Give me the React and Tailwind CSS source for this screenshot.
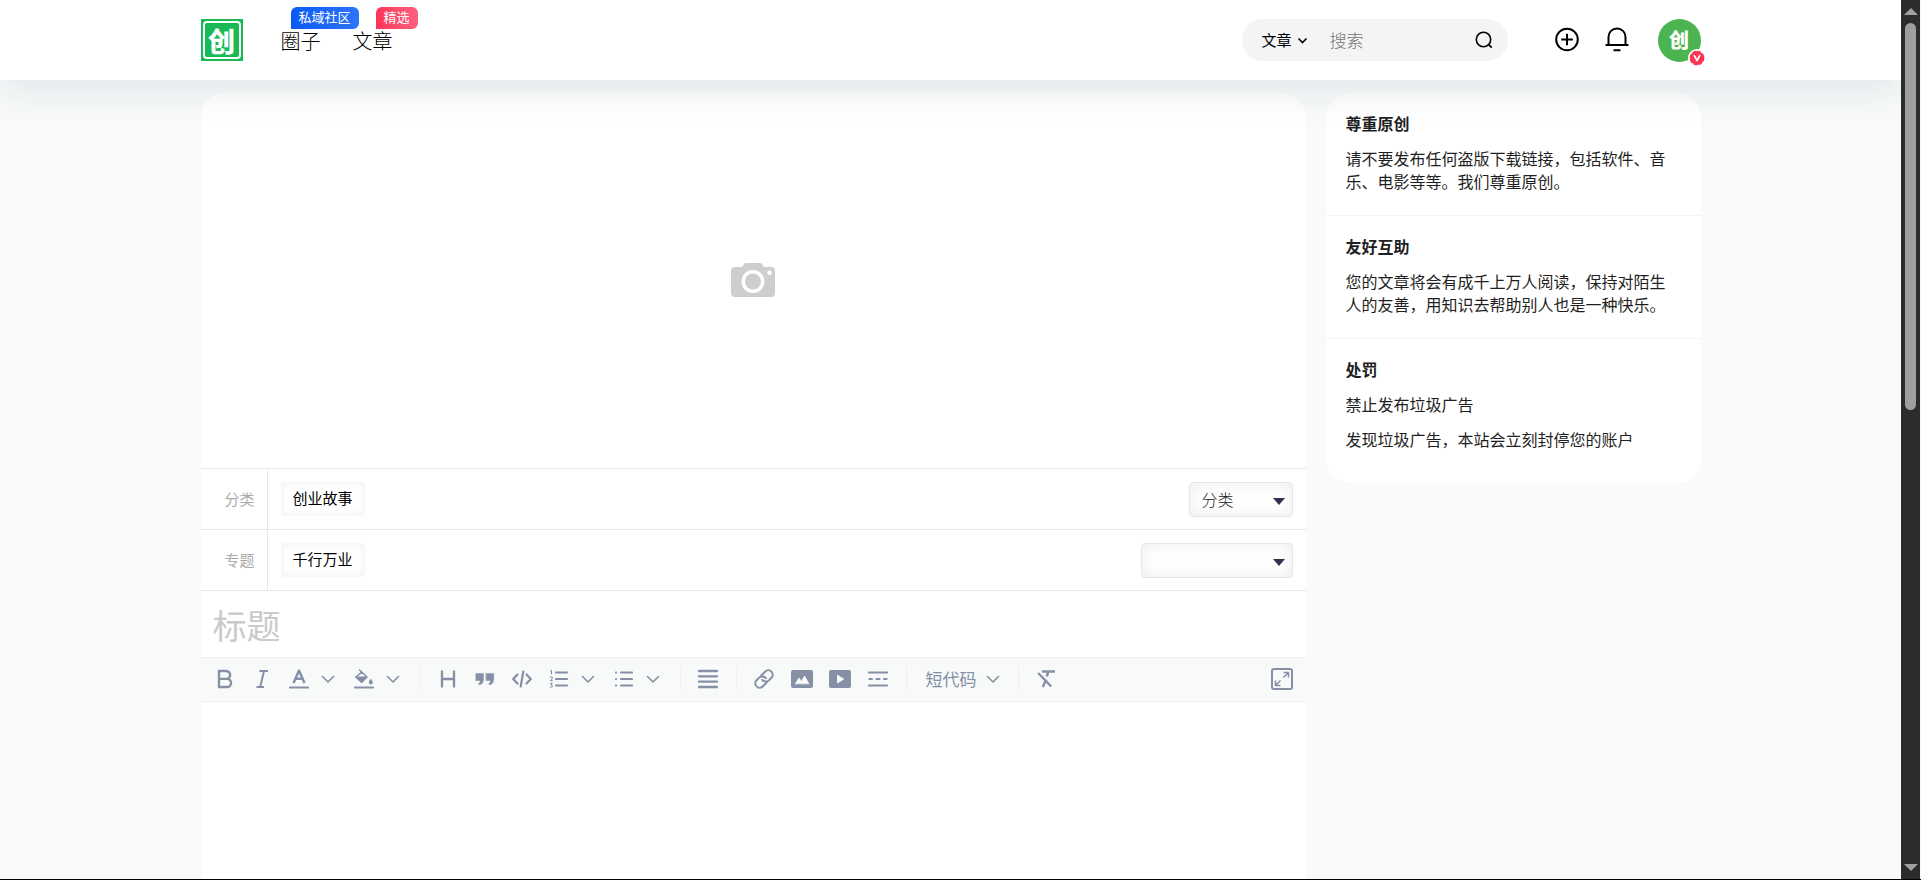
import React, { useState } from "react";

const font = "font-['Noto_Sans_CJK_SC',sans-serif]";

const tips = [
  { title: "尊重原创", lines: ["请不要发布任何盗版下载链接，包括软件、音乐、电影等等。我们尊重原创。"] },
  { title: "友好互助", lines: ["您的文章将会有成千上万人阅读，保持对陌生人的友善，用知识去帮助别人也是一种快乐。"] },
  { title: "处罚", lines: ["禁止发布垃圾广告", "发现垃圾广告，本站会立刻封停您的账户"] },
];

function Svg({ w = 20, h = 20, children, className = "" }) {
  return (
    <svg width={w} height={h} viewBox={`0 0 ${w} ${h}`} fill="none" stroke="currentColor" strokeWidth="2" strokeLinecap="round" strokeLinejoin="round" className={`shrink-0 ${className}`} aria-hidden="true">
      {children}
    </svg>
  );
}

function Chevron() {
  return (
    <Svg w={14} h={14}>
      <path d="M1.5 4.5 7 10l5.5-5.5" strokeWidth="1.6" />
    </Svg>
  );
}

function Tool({ label, wide, children }) {
  return (
    <button type="button" aria-label={label} className={`${wide ? "w-[38px]" : "w-[37px]"} h-full flex items-center justify-center`}>
      {children}
    </button>
  );
}

function Drop({ label }) {
  return (
    <button type="button" aria-label={label} className="w-7 h-full flex items-center pl-[3px]">
      <Chevron />
    </button>
  );
}

function Divider() {
  return <span className="w-px h-6 mx-[9px] bg-[#eeeff1]" />;
}

function Header() {
  return (
    <header className="relative z-10 shrink-0 bg-white shadow-[0_10px_40px_rgba(30,50,60,0.1)]">
      <div className="max-w-[1500px] mx-auto h-20 flex items-center">
        <a href="#" aria-label="首页" className="w-[42px] h-[42px] p-0.5 bg-[#19b955]">
          <span className="w-full h-full border-2 border-white rounded flex items-center justify-center text-white font-black text-[27px] leading-none">创</span>
        </a>
        <nav className="flex gap-8 ml-[38px] pt-px text-xl leading-6 font-light text-black">
          <a href="#" className="relative">
            圈子
            <span className="absolute left-[10px] -top-[22px] px-2 h-[22px] leading-[20px] text-[13px] font-normal text-white whitespace-nowrap rounded-md rounded-bl-none bg-linear-to-r from-[#0a5af5] to-[#2b74fb]">私域社区</span>
          </a>
          <a href="#" className="relative">
            文章
            <span className="absolute left-[23px] -top-[22px] px-2 h-[22px] leading-[20px] text-[13px] font-normal text-white whitespace-nowrap rounded-md rounded-bl-none bg-linear-to-r from-[#fb3356] to-[#fd5f7f]">精选</span>
          </a>
        </nav>
        <form className="ml-auto w-[266px] h-[42px] rounded-full bg-[#f4f4f4] flex items-center pl-5 pr-[14px]" onSubmit={(e) => e.preventDefault()}>
          <button type="button" className="flex items-center gap-[5px] text-[15px] leading-6 text-black">
            文章
            <Svg w={11} h={11}>
              <path d="M1.5 3.5l4 4 4-4" strokeWidth="1.6" strokeLinecap="butt" strokeLinejoin="miter" />
            </Svg>
          </button>
          <input aria-label="搜索" placeholder="搜索" className="ml-[22px] flex-1 min-w-0 bg-transparent outline-none text-[17px] leading-6 font-light placeholder:text-[#757575]" />
          <button type="submit" aria-label="搜索" className="text-black">
            <Svg>
              <circle cx="9.5" cy="9.5" r="7.2" strokeWidth="1.6" />
              <path d="M14.7 14.7l3 3" strokeWidth="1.8" strokeLinecap="butt" />
            </Svg>
          </button>
        </form>
        <button type="button" aria-label="发布" className="ml-[46px] text-black">
          <Svg w={26} h={26}>
            <circle cx="13" cy="12.5" r="10.8" />
            <path d="M13 6.7v11.6M7.2 12.5h11.6" strokeLinecap="butt" />
          </Svg>
        </button>
        <button type="button" aria-label="消息" className="ml-6 text-black">
          <Svg w={26} h={26}>
            <path d="M4.5 17.8V9.9a8.5 8.5 0 0 1 17 0v7.9M1.5 18h23M9.5 23.2h7" strokeLinecap="butt" />
          </Svg>
        </button>
        <a href="#" aria-label="我的" className="relative ml-7 w-[43px] h-[43px] rounded-full bg-[#4bb451] flex items-center justify-center text-white font-black text-xl leading-none">
          创
          <Svg w={18} h={18} className="absolute -right-[5px] -bottom-[5px]">
            <circle cx="9" cy="9" r="9" fill="#fff" stroke="none" />
            <circle cx="9" cy="9" r="6.3" fill="#fb3553" stroke="#fb3553" strokeWidth="2.2" strokeDasharray="2.6 2.35" />
            <path d="M6.3 6.6 9 11.5l2.7-4.9" stroke="#fff" strokeWidth="1.7" />
          </Svg>
        </a>
      </div>
    </header>
  );
}

function FieldRow({ id, label, tag, options, selectClass }) {
  return (
    <div className="h-[61px] shrink-0 border-t border-[#e7e8ea] flex items-stretch pr-[13px]">
      <label htmlFor={id} className="w-[67px] border-r border-[#e7e8ea] flex items-center justify-end pr-3 text-[15px] text-[#a9abae]">{label}</label>
      <div className="flex-1 flex items-center pl-[13px]">
        <button type="button" className="h-[34px] px-3 pb-0.5 rounded text-[15px] text-black shadow-[inset_0_0_10px_#efefef]">{tag}</button>
      </div>
      <div className={`relative self-center ${selectClass}`}>
        <select id={id} className="w-full h-[35px] pl-3 rounded border border-[#e6e6e6] bg-white shadow-[inset_0_0_16px_#ececec] appearance-none text-base leading-6 font-light text-[#222]">
          {options.map((o) => (
            <option key={o}>{o}</option>
          ))}
        </select>
        <svg width="12" height="7" viewBox="0 0 12 7" className="absolute right-2 top-4 pointer-events-none" aria-hidden="true">
          <path d="M0 0h12L6 7z" fill="#32324e" />
        </svg>
      </div>
    </div>
  );
}

function Toolbar() {
  return (
    <div className="h-[45px] shrink-0 border-y border-[#eceded] bg-[#f8f9f9] flex items-center pl-1.5 pr-[13px] pb-0.5 text-[#8590a6]">
      <Tool label="粗体">
        <Svg>
          <path d="M4 2h7.2a3.9 3.9 0 0 1 0 7.9H4zM4 9.9h8a4 4 0 0 1 0 8.1H4z" strokeWidth="2.4" />
        </Svg>
      </Tool>
      <Tool label="斜体">
        <Svg>
          <path d="M7.5 2H16M4.5 18h7.5M12 2 8.2 18" strokeLinecap="butt" />
        </Svg>
      </Tool>
      <Tool label="文字颜色">
        <Svg>
          <path d="M4.5 14 10 1.5 15.5 14M6.5 9.8h7" strokeWidth="2.4" strokeLinecap="butt" />
          <path d="M1 18.5h18" strokeWidth="2.2" />
        </Svg>
      </Tool>
      <Drop label="选择文字颜色" />
      <Tool label="背景颜色">
        <Svg>
          <path d="M5.5 1 13 8l-5.3 5.2L2 8l5.7-5" strokeWidth="1.6" />
          <path d="M2 8h11l-5.3 5.2z" fill="currentColor" strokeWidth="1" />
          <path d="M16.8 9.8c1.2 1.6 2 2.6 2 3.7a2 2 0 0 1-4 0c0-1.1.8-2.1 2-3.7z" fill="currentColor" stroke="none" />
          <path d="M1 18.5h18" strokeWidth="2.2" />
        </Svg>
      </Tool>
      <Drop label="选择背景颜色" />
      <Divider />
      <Tool label="标题">
        <Svg>
          <path d="M4 2.5v15M16 2.5v15M4 10h12" strokeWidth="2.3" />
        </Svg>
      </Tool>
      <Tool label="引用">
        <Svg>
          <path d="M1 4.5h7.5v6c0 2.6-1.4 4.8-4 5.5l-1-1.2c1.2-.8 1.7-1.8 1.7-3.3H1zM11.2 4.5h7.5v6c0 2.6-1.4 4.8-4 5.5l-1-1.2c1.2-.8 1.7-1.8 1.7-3.3h-4.2z" fill="currentColor" strokeWidth="0.5" />
        </Svg>
      </Tool>
      <Tool label="代码">
        <Svg>
          <path d="M5.5 5.5 1.2 10l4.3 4.5M14.5 5.5l4.3 4.5-4.3 4.5M11.3 2.5 8.7 17.5" strokeWidth="2.2" />
        </Svg>
      </Tool>
      <Tool label="有序列表">
        <Svg>
          <path d="M7 3.5h11M7 10h11M7 16.5h11" strokeWidth="2.2" />
          <path d="M1.5 2 2.5 1.5v3.5M1.2 8h2v2l-2 1.8h2.2M1.2 14.5h2l-1 1.5 1 .5v1.5h-2" strokeWidth="1" />
        </Svg>
      </Tool>
      <Drop label="有序列表样式" />
      <Tool label="无序列表">
        <Svg>
          <path d="M7 3.5h11M7 10h11M7 16.5h11" strokeWidth="2.2" />
          <path d="M2 3.5h.1M2 10h.1M2 16.5h.1" strokeWidth="2.2" />
        </Svg>
      </Tool>
      <Drop label="无序列表样式" />
      <Divider />
      <Tool label="对齐">
        <Svg>
          <path d="M1 2h18M1 7.3h18M1 12.6h18M1 18h18" strokeWidth="2.3" />
        </Svg>
      </Tool>
      <Divider />
      <Tool label="链接">
        <Svg>
          <g transform="translate(-.5 -.5) scale(.875)" strokeWidth="2.3">
            <path d="M10 13a5 5 0 0 0 7.540.540l3-3a5 5 0 0 0-7.070-7.070l-4.500 4.500" />
            <path d="M14 11a5 5 0 0 0-7.540-.540l-3 3a5 5 0 0 0 7.070 7.070l4.500-4.500" />
          </g>
        </Svg>
      </Tool>
      <Tool label="图片" wide>
        <Svg w={22}>
          <rect x="0" y="1" width="22" height="18" rx="2" fill="currentColor" stroke="none" />
          <path d="M4.5 14.5 8 9l2.5 3.5L13.5 7l4.2 7.5z" fill="#fff" stroke="#fff" strokeWidth="0.8" />
        </Svg>
      </Tool>
      <Tool label="视频" wide>
        <Svg w={22}>
          <rect x="0" y="1" width="22" height="18" rx="2" fill="currentColor" stroke="none" />
          <path d="M8.5 6.5v7.4l6-3.7z" fill="#fff" stroke="#fff" strokeWidth="0.8" />
        </Svg>
      </Tool>
      <Tool label="分割线" wide>
        <Svg>
          <path d="M1 3.5h18M1 16.5h18M1.5 10h2.5M8.5 10h3M16 10h2.5" strokeWidth="2.2" />
        </Svg>
      </Tool>
      <Divider />
      <button type="button" className="h-full flex items-center gap-[9px] pl-2.5 pr-[9px] text-[17px] leading-6">
        短代码
        <Chevron />
      </button>
      <Divider />
      <Tool label="清除格式">
        <Svg>
          <path d="M6 2.5h13M11.8 2.5v1.5M10.3 10.5 6.8 18M2.2 4l13 13.5" strokeWidth="2.4" strokeLinecap="butt" />
          <path d="M12 3.5 10.8 7.5" strokeWidth="2.6" strokeLinecap="butt" />
        </Svg>
      </Tool>
      <button type="button" aria-label="全屏" className="ml-auto">
        <Svg w={22} h={22}>
          <rect x="1" y="1" width="20" height="20" rx="2" />
          <path d="M12.5 4.5h5v5M17.5 4.5l-5 5M9.5 17.5h-5v-5M4.5 17.5l5-5" strokeWidth="1.5" strokeLinecap="butt" />
        </Svg>
      </button>
    </div>
  );
}

function Scrollbar() {
  return (
    <div className="w-5 shrink-0 bg-[#2c2c2c] border-r border-[#f4f4f4] flex flex-col items-center pt-2 pb-2" aria-hidden="true">
      <svg width="14" height="7" viewBox="0 0 14 7"><path d="M0 7h14L7 0z" fill="#a0a0a0" /></svg>
      <div className="w-full flex-1 flex flex-col items-center pt-2">
        <span className="w-[11px] h-[46%] rounded-full bg-[#9f9f9f]" />
      </div>
      <svg width="14" height="7" viewBox="0 0 14 7"><path d="M0 0h14L7 7z" fill="#a0a0a0" /></svg>
    </div>
  );
}

export default function App() {
  const [title, setTitle] = useState("");
  const [body, setBody] = useState("");

  return (
    <div className={`h-screen flex border-b border-black bg-[#f8fafb] overflow-hidden ${font}`}>
      <div className="flex-1 min-w-0 flex flex-col overflow-hidden">
        <Header />
        <div className="w-full max-w-[1500px] mx-auto flex-1 min-h-0 flex items-start gap-5 pt-[13px]">
          <main className="flex-1 min-w-0 h-full bg-white rounded-t-3xl flex flex-col">
            <button type="button" aria-label="上传封面" className="h-[375px] pb-0.5 shrink-0 flex items-center justify-center text-[#cecece]">
              <svg width="44" height="34" viewBox="0 0 44 34" aria-hidden="true">
                <path fillRule="evenodd" fill="currentColor" d="M4 4h7l2-3q.6-1 2-1h14q1.400 0 2 1l2 3h7q4 0 4 4v22q0 4-4 4H4q-4 0-4-4V8q0-4 4-4zM22 7a11.500 11.500 0 1 0 0 23 11.500 11.500 0 0 0 0-23zM38.500 7.500a2.300 2.300 0 1 0 0 4.600 2.300 2.300 0 0 0 0-4.600z" />
                <circle cx="22" cy="18.500" r="8" fill="currentColor" />
              </svg>
            </button>
            <FieldRow id="category" label="分类" tag="创业故事" options={["分类"]} selectClass="w-[104px]" />
            <FieldRow id="topic" label="专题" tag="千行万业" options={[""]} selectClass="w-[152px]" />
            <input aria-label="标题" placeholder="标题" value={title} onChange={(e) => setTitle(e.target.value)} className="h-[67px] shrink-0 border-t border-[#e7e8ea] px-3 text-[34px] outline-none placeholder:text-[#cacaca]" />
            <Toolbar />
            <textarea aria-label="正文" value={body} onChange={(e) => setBody(e.target.value)} className="flex-1 min-h-0 p-4 resize-none outline-none" />
          </main>
          <aside className="w-[375px] shrink-0 bg-white rounded-3xl pb-2.5 text-base text-[#1f1f23]">
            {tips.map((t) => (
              <section key={t.title} className="px-5 pt-[18px] pb-[22px] border-b border-[#f3f4f5] last:border-b-0">
                <h3 className="font-bold leading-6">{t.title}</h3>
                {t.lines.map((l) => (
                  <p key={l} className="mt-3 leading-[23px]">{l}</p>
                ))}
              </section>
            ))}
          </aside>
        </div>
      </div>
      <Scrollbar />
    </div>
  );
}
